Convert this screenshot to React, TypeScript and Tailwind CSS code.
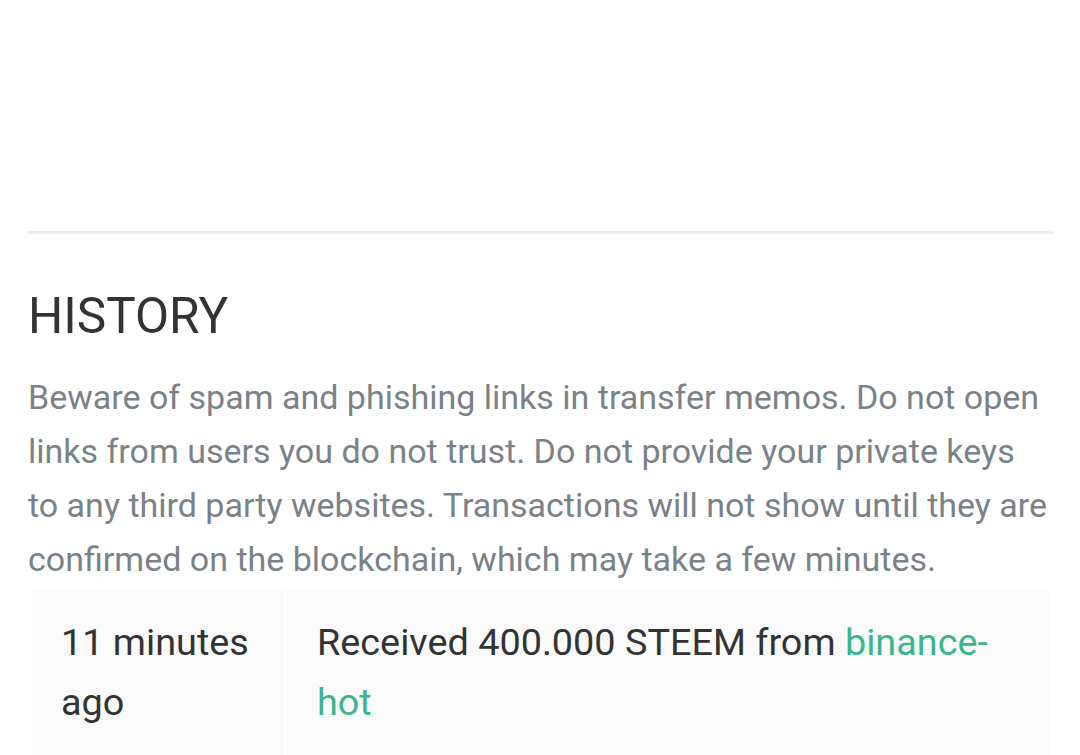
export default function App() {
  return (
    <div className="h-[755px] w-[1080px] overflow-hidden bg-white font-['Roboto',sans-serif]">
      <div className="h-[231px]" />
      <div className="ml-[28px] mr-[26px] h-[3px] bg-[#eeeeee]" />

      <div className="px-[28px]">
        <h2 className="mt-[52px] text-[49.5px] leading-[60px] font-normal text-[#333333]">
          HISTORY
        </h2>
        <p className="mt-[24px] text-[34px] leading-[54px] text-[#7a8288]">
          Beware of spam and phishing links in transfer memos. Do not open links from users you do not trust. Do not
          provide your private keys to any third party websites. Transactions will not show until they are confirmed
          on the blockchain, which may take a few minutes.
        </p>
      </div>

      <div className="mt-[4px] ml-[32px] flex w-[1017px] gap-[4px]">
        <div className="w-[251px] bg-[#fafafa] px-[29px] pt-[22px] pb-[30px] text-[37.8px] leading-[60px] text-[#333333]">
          11 minutes ago
        </div>
        <div className="flex-1 bg-[#fafafa] px-[30px] pt-[22px] pb-[30px] text-[37.8px] leading-[60px] text-[#333333]">
          Received 400.000 STEEM from <span className="text-[#3ab68f]">binance-hot</span>
        </div>
      </div>
    </div>
  );
}
